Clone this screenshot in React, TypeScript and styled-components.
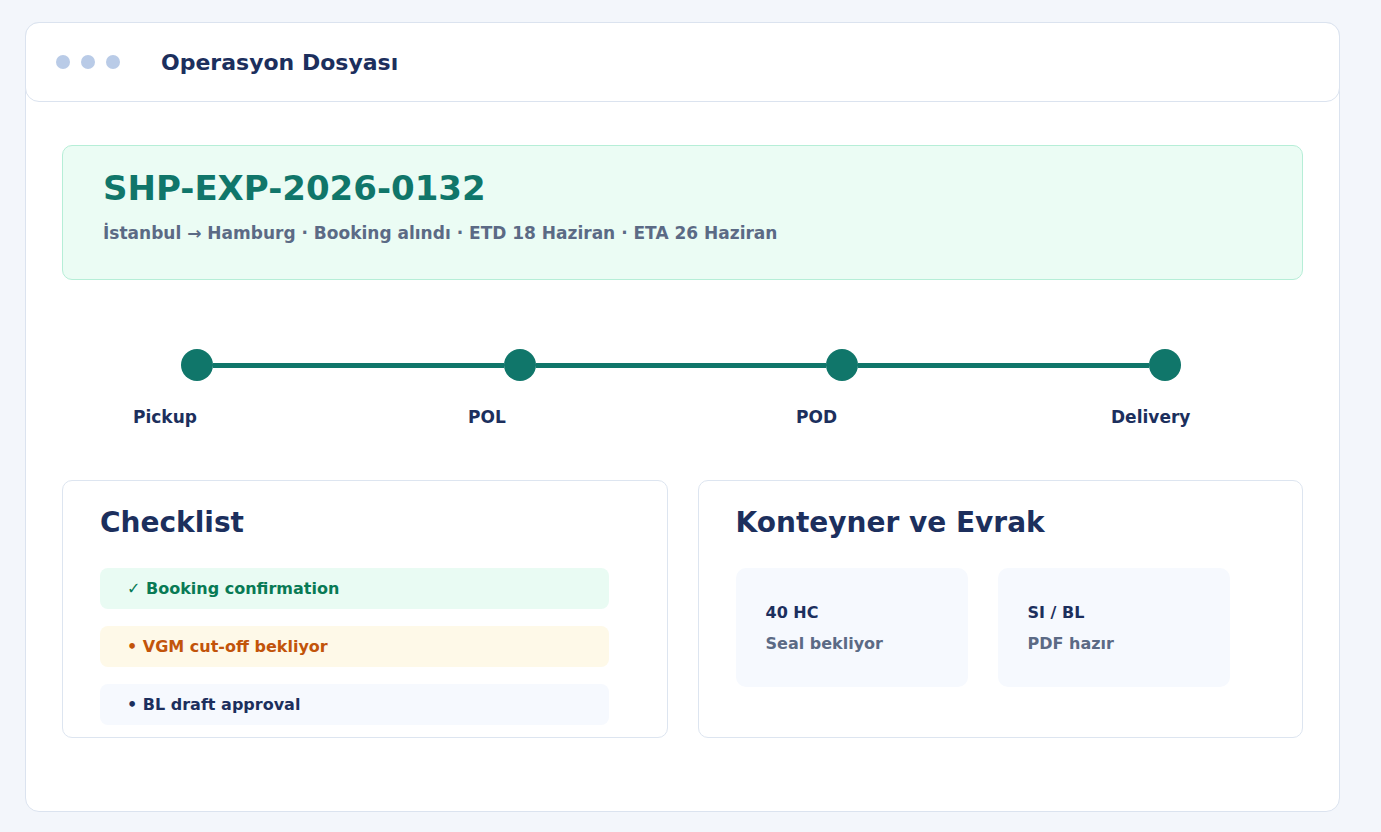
import React from "react";
import styled, { createGlobalStyle } from "styled-components";

const GlobalStyle = createGlobalStyle`
  html, body {
    margin: 0;
    background: #f3f6fb;
    font-family: "DejaVu Sans", "Liberation Sans", sans-serif;
    font-weight: 900;
  }
`;

const stops = ["Pickup", "POL", "POD", "Delivery"];

const checklist: { text: string; tone: "done" | "warn" | "todo" }[] = [
  { text: "✓ Booking confirmation", tone: "done" },
  { text: "• VGM cut-off bekliyor", tone: "warn" },
  { text: "• BL draft approval", tone: "todo" },
];

const docs = [
  { title: "40 HC", note: "Seal bekliyor" },
  { title: "SI / BL", note: "PDF hazır" },
];

const App = () => {
  return (
    <Page>
      <GlobalStyle />
      <Window>
        <Header>
          <Dots>
            <Dot />
            <Dot />
            <Dot />
          </Dots>
          <HeaderTitle>Operasyon Dosyası</HeaderTitle>
        </Header>

        <Body>
          <Hero>
            <ShipmentId>SHP-EXP-2026-0132</ShipmentId>
            <Route>
              İstanbul → Hamburg · Booking alındı · ETD 18 Haziran · ETA 26 Haziran
            </Route>
          </Hero>

          <Timeline>
            <Track>
              {stops.map((s, i) => (
                <React.Fragment key={s}>
                  <Stop />
                  {i < stops.length - 1 && <Segment />}
                </React.Fragment>
              ))}
            </Track>
            <Labels>
              {stops.map((s) => (
                <Label key={s}>{s}</Label>
              ))}
            </Labels>
          </Timeline>

          <Panels>
            <Panel>
              <PanelTitle>Checklist</PanelTitle>
              <CheckList>
                {checklist.map((c) => (
                  <CheckItem key={c.text} tone={c.tone}>
                    {c.text}
                  </CheckItem>
                ))}
              </CheckList>
            </Panel>
            <Panel>
              <PanelTitle>Konteyner ve Evrak</PanelTitle>
              <Tiles>
                {docs.map((d) => (
                  <Tile key={d.title}>
                    <TileTitle>{d.title}</TileTitle>
                    <TileNote>{d.note}</TileNote>
                  </Tile>
                ))}
              </Tiles>
            </Panel>
          </Panels>
        </Body>
      </Window>
    </Page>
  );
};

export default App;

const Page = styled.div`
  padding: 22px 0 0 25px;
`;

const Window = styled.div`
  width: 1315px;
  height: 790px;
  box-sizing: border-box;
  background: #ffffff;
  border: 1px solid #dbe3ef;
  border-radius: 14px;
`;

const Header = styled.div`
  display: flex;
  align-items: center;
  height: 80px;
  margin: -1px -1px 0;
  box-sizing: border-box;
  padding-left: 30px;
  border: 1px solid #dbe3ef;
  border-radius: 14px;
  background: #ffffff;
`;

const Dots = styled.div`
  display: flex;
  gap: 11px;
  margin-right: 41px;
`;

const Dot = styled.span`
  width: 14px;
  height: 14px;
  border-radius: 50%;
  background: #b9cbe7;
`;

const HeaderTitle = styled.h1`
  margin: 0;
  font-size: 22px;
  font-weight: 900;
  color: #1c2f5d;
`;

const Body = styled.div`
  padding: 43px 36px 0;
`;

const Hero = styled.div`
  height: 135px;
  box-sizing: border-box;
  padding: 22px 40px 0;
  background: #ebfcf4;
  border: 1px solid #b6eed7;
  border-radius: 10px;
`;

const ShipmentId = styled.div`
  font-size: 34px;
  line-height: 40px;
  color: #10766a;
`;

const Route = styled.div`
  margin-top: 14px;
  font-size: 17px;
  line-height: 22px;
  color: #5b6a85;
`;

const Timeline = styled.div`
  padding: 69px 0 0;
`;

const Track = styled.div`
  display: flex;
  align-items: center;
  padding: 0 122px 0 119px;
`;

const Stop = styled.span`
  flex: none;
  width: 32px;
  height: 32px;
  border-radius: 50%;
  background: #10766a;
`;

const Segment = styled.span`
  flex: 1;
  height: 5px;
  background: #10766a;
`;

const Labels = styled.div`
  display: grid;
  grid-template-columns: 335px 328px 315px auto;
  padding-left: 71px;
  margin-top: 26px;
`;

const Label = styled.span`
  font-size: 17px;
  line-height: 20px;
  color: #1c2f5d;
`;

const Panels = styled.div`
  display: grid;
  grid-template-columns: 1fr 1fr;
  gap: 30px;
  margin-top: 53px;
`;

const Panel = styled.div`
  height: 258px;
  box-sizing: border-box;
  padding: 25px 37px 0;
  border: 1px solid #dde5f0;
  border-radius: 10px;
`;

const PanelTitle = styled.h2`
  margin: 0;
  font-size: 28px;
  line-height: 34px;
  font-weight: 900;
  color: #1c2f5d;
`;

const CheckList = styled.div`
  display: flex;
  flex-direction: column;
  gap: 17px;
  margin-top: 28px;
  width: 509px;
`;

const toneStyles = {
  done: { bg: "#e9fbf3", fg: "#087a55" },
  warn: { bg: "#fef9e8", fg: "#c2540a" },
  todo: { bg: "#f6f9fe", fg: "#1c2f5d" },
};

const CheckItem = styled.div<{ tone: "done" | "warn" | "todo" }>`
  height: 41px;
  display: flex;
  align-items: center;
  padding-left: 27px;
  border-radius: 8px;
  font-size: 16px;
  background: ${(p) => toneStyles[p.tone].bg};
  color: ${(p) => toneStyles[p.tone].fg};
`;

const Tiles = styled.div`
  display: flex;
  gap: 30px;
  margin-top: 28px;
`;

const Tile = styled.div`
  width: 232px;
  height: 119px;
  box-sizing: border-box;
  padding: 35px 30px 0;
  border-radius: 10px;
  background: #f6f9fe;
`;

const TileTitle = styled.div`
  font-size: 16px;
  color: #1c2f5d;
`;

const TileNote = styled.div`
  margin-top: 12px;
  font-size: 16px;
  color: #5b6a85;
`;
